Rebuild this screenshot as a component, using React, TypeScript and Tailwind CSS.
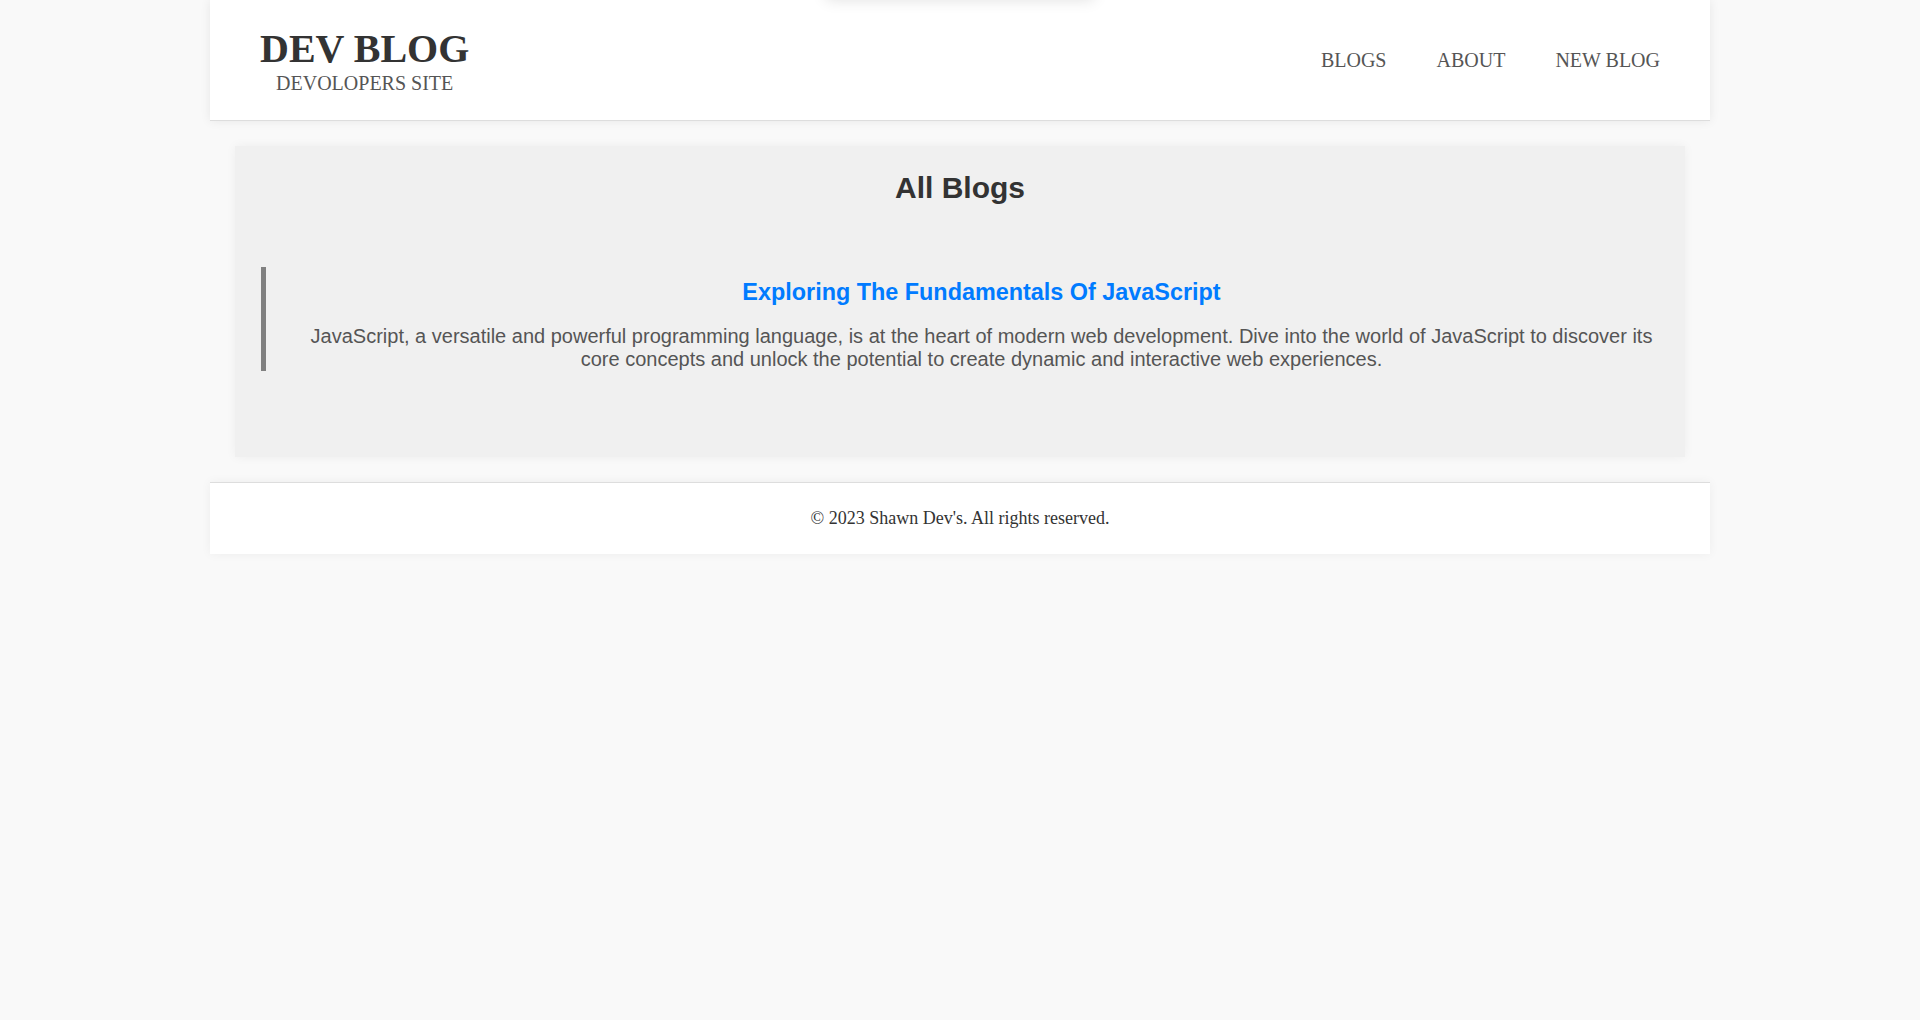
import React from "react";

const navLinks = ["Blogs", "About", "New Blog"];

const blogs = [
  {
    id: 1,
    title: "Exploring The Fundamentals Of JavaScript",
    body: "JavaScript, a versatile and powerful programming language, is at the heart of modern web development. Dive into the world of JavaScript to discover its core concepts and unlock the potential to create dynamic and interactive web experiences.",
  },
];

function Header() {
  return (
    <header className="h-[121px] flex items-center justify-between bg-white border-b border-[#ddd] pl-[50px] pr-[50px] shadow-[0_0_10px_rgba(0,0,0,0.08)] font-['Liberation_Serif',serif]">
      <div className="text-center">
        <h1 className="text-[40px] leading-[46px] font-bold text-[#333]">DEV BLOG</h1>
        <p className="text-[20px] leading-[23px] text-[#555]">DEVOLOPERS SITE</p>
      </div>
      <nav className="flex items-center gap-[50px]">
        {navLinks.map((link) => (
          <a key={link} href="#" className="text-[20px] uppercase text-[#555]">
            {link}
          </a>
        ))}
      </nav>
    </header>
  );
}

export default function App() {
  return (
    <div className="relative min-h-screen bg-[#f9f9f9] overflow-hidden">
      {/* stray element sitting above the viewport, only its shadow shows */}
      <div className="absolute z-10 top-[-50px] left-1/2 -translate-x-1/2 w-[268px] h-[50px] bg-white shadow-[0_0_14px_rgba(0,0,0,0.12)]" />

      <div className="w-[1500px] mx-auto">
        <Header />

        <main className="mx-[25px] mt-[25px] bg-[#f0f0f0] pt-[25px] pb-[86px] shadow-[0_0_10px_rgba(0,0,0,0.05)] font-['Liberation_Sans',Arial,sans-serif]">
          <h2 className="text-[30px] leading-[34.5px] font-bold text-center text-[#333]">All Blogs</h2>

          <div className="mt-[61.5px]">
            {blogs.map((blog) => (
              <div
                key={blog.id}
                className="ml-[26px] mr-[25px] border-l-[5px] border-[#808080] pt-[12px] pl-[37px] text-center"
              >
                <h3 className="text-[23.4px] leading-[26.9px] font-bold text-[#007bff]">{blog.title}</h3>
                <p className="mt-[19.5px] text-[20px] leading-[23px] text-[#555]">{blog.body}</p>
              </div>
            ))}
          </div>
        </main>

        <footer className="mt-[25px] bg-white border-t border-[#ddd] py-[25px] text-center shadow-[0_0_10px_rgba(0,0,0,0.05)] font-['Liberation_Serif',serif]">
          <p className="text-[18px] leading-[20.7px] text-[#333]">© 2023 Shawn Dev's. All rights reserved.</p>
        </footer>
      </div>
    </div>
  );
}
